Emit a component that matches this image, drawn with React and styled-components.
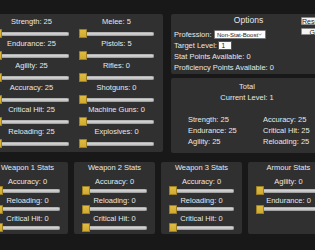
import React from 'react';
import styled, { createGlobalStyle } from 'styled-components';

const Global = createGlobalStyle`
  * { box-sizing: border-box; }
  html, body {
    margin: 0;
    padding: 0;
    width: 315px;
    height: 250px;
    overflow: hidden;
    background: #181818;
  }
  body {
    font-family: "Liberation Sans", Arial, sans-serif;
    color: #e8e8e8;
  }
`;

const Screen = styled.div`
  width: 345px;
  margin-left: -13px;
  padding-top: 14px;
  display: flex;
  flex-direction: column;
  gap: 9px;
`;

const TopRow = styled.div`
  display: flex;
  align-items: flex-start;
  gap: 8px;
`;

const Panel = styled.div`
  background: #303030;
  border-radius: 2px;
`;

const StatsPanel = styled(Panel)`
  width: 176px;
  height: 138px;
  padding: 4px 9px 0 7px;
  display: grid;
  grid-template-columns: 75px 75px;
  column-gap: 10px;
  row-gap: 2px;
  align-content: start;
`;

const Field = styled.div`
  display: flex;
  flex-direction: column;
  gap: ${(p) => p.$gap}px;
`;

const Label = styled.div`
  font-size: 7.5px;
  line-height: 8px;
  height: 8px;
  text-align: center;
  white-space: nowrap;
`;

const SliderRoot = styled.div`
  position: relative;
  height: 9px;
  display: flex;
  align-items: center;
`;

const Track = styled.div`
  flex: 1;
  height: 4px;
  margin-left: 2px;
  border-radius: 2px;
  background: linear-gradient(#e2e2e2, #b4b4b4);
  box-shadow: inset 0 0 0 0.5px #8c8c8c;
`;

const Handle = styled.div`
  position: absolute;
  top: 0;
  width: 8px;
  height: 9px;
  border-radius: 1.5px;
  background: linear-gradient(#e2be44, #cfa82e);
  box-shadow: inset 0 0 0 1px #9b7f21;
`;

function Slider({ value = 0, min = 0, max = 100 }) {
  const pct = (value - min) / (max - min);
  return (
    <SliderRoot>
      <Track />
      <Handle style={{ left: `calc(${pct} * (100% - 8px))` }} />
    </SliderRoot>
  );
}

const RightColumn = styled.div`
  width: 152px;
  display: flex;
  flex-direction: column;
  gap: 4px;
`;

const OptionsPanel = styled(Panel)`
  position: relative;
  height: 60px;
  padding: 1px 0 0 3px;
`;

const OptionsTitle = styled.div`
  font-size: 8.5px;
  line-height: 11px;
  text-align: center;
  margin-bottom: 3px;
`;

const Line = styled.div`
  font-size: 7.5px;
  line-height: 11px;
  height: 11px;
  white-space: nowrap;
  display: flex;
  align-items: center;
  gap: ${(p) => p.$gap || 0}px;
`;

const Select = styled.div`
  width: 52px;
  height: 9px;
  background: #fdfdfd;
  border: 0.5px solid #7a7a7a;
  border-radius: 1px;
  color: #222;
  font-size: 6px;
  line-height: 8px;
  padding-left: 2px;
  display: flex;
  align-items: center;
  justify-content: space-between;
  padding-right: 3px;
`;

const Input = styled.div`
  width: 14px;
  height: 9px;
  background: #fdfdfd;
  border: 0.5px solid #555;
  color: #111;
  font-size: 6.5px;
  line-height: 8px;
  padding-left: 2px;
`;

const ButtonStack = styled.div`
  position: absolute;
  top: 3px;
  left: 130px;
  display: flex;
  flex-direction: column;
  align-items: flex-start;
  gap: 3px;
`;

const Button = styled.div`
  width: ${(p) => p.$w}px;
  height: 7.5px;
  background: #f4f4f4;
  border: 0.5px solid #8a8a8a;
  border-radius: 1px;
  color: #222;
  font-size: 7px;
  line-height: 7px;
  text-align: center;
  white-space: nowrap;
`;

const TotalPanel = styled(Panel)`
  height: 75px;
  padding-top: 3px;
`;

const Centered = styled.div`
  font-size: 7.5px;
  line-height: 11px;
  text-align: center;
`;

const TotalGrid = styled.div`
  margin-top: 11px;
  padding-left: 17px;
  display: grid;
  grid-template-columns: 75px auto;
  font-size: 7.5px;
  line-height: 11px;
  white-space: nowrap;
`;

const BottomRow = styled.div`
  display: flex;
  gap: 6px;
`;

const SmallPanel = styled(Panel)`
  flex: 0 0 81px;
  height: 72px;
  padding: 1px 8px 0;
`;

const SmallTitle = styled.div`
  font-size: 7.5px;
  line-height: 9px;
  text-align: center;
  white-space: nowrap;
  margin-bottom: 6px;
`;

const SmallFields = styled.div`
  display: flex;
  flex-direction: column;
  gap: 1.5px;
`;

const mainRows = [
  ['Strength: 25', 'Melee: 5'],
  ['Endurance: 25', 'Pistols: 5'],
  ['Agility: 25', 'Rifles: 0'],
  ['Accuracy: 25', 'Shotguns: 0'],
  ['Critical Hit: 25', 'Machine Guns: 0'],
  ['Reloading: 25', 'Explosives: 0'],
];

const bottomPanels = [
  { title: 'Weapon 1 Stats', fields: ['Accuracy: 0', 'Reloading: 0', 'Critical Hit: 0'] },
  { title: 'Weapon 2 Stats', fields: ['Accuracy: 0', 'Reloading: 0', 'Critical Hit: 0'] },
  { title: 'Weapon 3 Stats', fields: ['Accuracy: 0', 'Reloading: 0', 'Critical Hit: 0'] },
  { title: 'Armour Stats', fields: ['Agility: 0', 'Endurance: 0'] },
];

const totals = [
  ['Strength: 25', 'Accuracy: 25'],
  ['Endurance: 25', 'Critical Hit: 25'],
  ['Agility: 25', 'Reloading: 25'],
];

export default function App() {
  return (
    <>
      <Global />
      <Screen>
        <TopRow>
          <StatsPanel>
            {mainRows.flat().map((label) => (
              <Field key={label} $gap={3}>
                <Label>{label}</Label>
                <Slider value={0} />
              </Field>
            ))}
          </StatsPanel>
          <RightColumn>
            <OptionsPanel>
              <OptionsTitle>Options</OptionsTitle>
              <Line $gap={2.5}>
                <span>Profession:</span>
                <Select>
                  <span>Non-Stat-Boost</span>
                  <svg width="4" height="3" viewBox="0 0 4 3">
                    <path d="M0.4 0.6 L2 2.2 L3.6 0.6" fill="none" stroke="#666" strokeWidth="0.6" />
                  </svg>
                </Select>
              </Line>
              <Line $gap={1.5}>
                <span>Target Level:</span>
                <Input>1</Input>
              </Line>
              <Line>Stat Points Available: 0</Line>
              <Line>Proficiency Points Available: 0</Line>
              <ButtonStack>
                <Button $w={20}>Reset</Button>
                <Button $w={46}>Generate</Button>
              </ButtonStack>
            </OptionsPanel>
            <TotalPanel>
              <Centered>Total</Centered>
              <Centered>Current Level: 1</Centered>
              <TotalGrid>
                {totals.flat().map((t) => (
                  <div key={t}>{t}</div>
                ))}
              </TotalGrid>
            </TotalPanel>
          </RightColumn>
        </TopRow>
        <BottomRow>
          {bottomPanels.map((p) => (
            <SmallPanel key={p.title}>
              <SmallTitle>{p.title}</SmallTitle>
              <SmallFields>
                {p.fields.map((f) => (
                  <Field key={f} $gap={0}>
                    <Label>{f}</Label>
                    <Slider value={0} />
                  </Field>
                ))}
              </SmallFields>
            </SmallPanel>
          ))}
        </BottomRow>
      </Screen>
    </>
  );
}
